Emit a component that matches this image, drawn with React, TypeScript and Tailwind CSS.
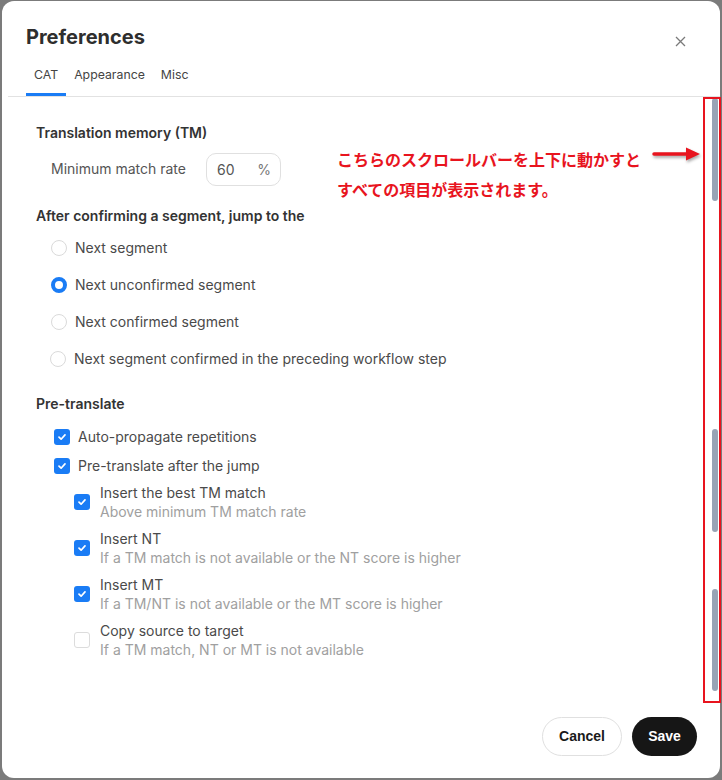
import React from "react";

const font = { fontFamily: "Inter, 'Noto Sans', 'Noto Sans CJK JP', sans-serif" };

function Radio({ checked }: { checked?: boolean }) {
  return checked ? (
    <span className="box-border inline-block h-4 w-4 shrink-0 rounded-full border-[4px] border-[#1a7cf5] bg-white" />
  ) : (
    <span className="box-border inline-block h-4 w-4 shrink-0 rounded-full border-[1.5px] border-[#dadada] bg-white" />
  );
}

function Check({ checked }: { checked?: boolean }) {
  return checked ? (
    <span className="flex h-4 w-4 shrink-0 items-center justify-center rounded-[3px] bg-[#1a7cf5]">
      <svg width="10" height="10" viewBox="0 0 10 10" fill="none">
        <path d="M2 5.2L4.1 7.2L8 2.9" stroke="white" strokeWidth="1.7" strokeLinecap="round" strokeLinejoin="round" />
      </svg>
    </span>
  ) : (
    <span className="box-border h-4 w-4 shrink-0 rounded-[3px] border-[1.5px] border-[#dcdcdc] bg-white" />
  );
}

function RadioRow({ label, checked, shift }: { label: string; checked?: boolean; shift?: boolean }) {
  return (
    <div className={`flex h-[37px] items-center gap-2 ${shift ? "pl-[14px]" : "pl-[15px]"}`}>
      <Radio checked={checked} />
      <span className="text-[14px] text-[#4a4a4a]">{label}</span>
    </div>
  );
}

function SubCheck({ title, sub, checked }: { title: string; sub: string; checked?: boolean }) {
  return (
    <div className="flex items-center gap-[10px] pl-[38px]">
      <Check checked={checked} />
      <div className="flex flex-col">
        <span className="text-[14px] leading-[19px] text-[#4a4a4a]">{title}</span>
        <span className="text-[14px] leading-[19px] text-[#a0a0a0]">{sub}</span>
      </div>
    </div>
  );
}

export default function App() {
  return (
    <div className="h-[780px] w-[722px] overflow-hidden bg-[#7b7b7b] pl-[2px] pt-[1px]" style={font}>
      <div className="relative flex h-[777px] w-[718px] flex-col rounded-[12px] bg-white">
        {/* header */}
        <div className="flex items-start justify-between pl-[24px] pr-[34px] pt-[22px]">
          <h1 className="text-[20px] font-bold leading-[28px] text-[#2e2e2e]">Preferences</h1>
          <svg className="mt-[13px]" width="11" height="11" viewBox="0 0 11 11">
            <path d="M1 1L10 10M10 1L1 10" stroke="#7a7a7a" strokeWidth="1.3" />
          </svg>
        </div>
        {/* tabs */}
        <div className="ml-[6px] mt-[15px] flex border-b border-[#e2e2e2] pl-[18px]">
          <div className="border-b-[3px] border-[#1a7cf5] px-2 pb-[9px] text-[12.3px] leading-[18px] text-[#444]">CAT</div>
          <div className="px-2 pb-[9px] text-[12.3px] leading-[18px] text-[#444]">Appearance</div>
          <div className="px-2 pb-[9px] text-[12.3px] leading-[18px] text-[#444]">Misc</div>
        </div>

        {/* content */}
        <div className="relative flex-1 pl-[34px] pt-[26px]">
          <div className="text-[14px] font-semibold leading-[20px] text-[#333]">Translation memory (TM)</div>
          <div className="mt-[10px] flex items-center pl-[15px]">
            <span className="w-[155px] pb-[3px] text-[14px] text-[#555]">Minimum match rate</span>
            <div className="flex h-[33px] w-[75px] items-center justify-between rounded-[10px] border border-[#e0e0e0] pl-[10px] pr-[9px] text-[14px] text-[#555]">
              <span>60</span>
              <span className="text-[#777]">%</span>
            </div>
          </div>

          <div className="mt-[20px] text-[14px] font-semibold leading-[20px] text-[#333]">After confirming a segment, jump to the</div>
          <div className="mt-[3px] flex flex-col">
            <RadioRow label="Next segment" />
            <RadioRow label="Next unconfirmed segment" checked />
            <RadioRow label="Next confirmed segment" />
            <RadioRow label="Next segment confirmed in the preceding workflow step" shift />
          </div>

          <div className="mt-[17px] text-[14px] font-semibold leading-[20px] text-[#333]">Pre-translate</div>
          <div className="mt-[8px] flex flex-col">
            <div className="flex h-[29px] items-center gap-2 pl-[18px]">
              <Check checked />
              <span className="text-[14px] text-[#4a4a4a]">Auto-propagate repetitions</span>
            </div>
            <div className="flex h-[29px] items-center gap-2 pl-[18px]">
              <Check checked />
              <span className="text-[14px] text-[#4a4a4a]">Pre-translate after the jump</span>
            </div>
            <div className="mt-[3px] flex flex-col gap-[8px]">
              <SubCheck title="Insert the best TM match" sub="Above minimum TM match rate" checked />
              <SubCheck title="Insert NT" sub="If a TM match is not available or the NT score is higher" checked />
              <SubCheck title="Insert MT" sub="If a TM/NT is not available or the MT score is higher" checked />
              <SubCheck title="Copy source to target" sub="If a TM match, NT or MT is not available" />
            </div>
          </div>

          {/* scrollbar thumbs */}
          <div className="absolute right-[2px] top-[1px] h-[103px] w-[6px] rounded-full bg-[#98a3b5]" />
          <div className="absolute right-[2px] top-[332px] h-[103px] w-[6px] rounded-full bg-[#98a3b5]" />
          <div className="absolute right-[2px] top-[492px] h-[102px] w-[6px] rounded-full bg-[#98a3b5]" />

          {/* red annotation */}
          <div className="absolute left-[335px] top-[47px] text-[16px] font-bold leading-[30px] text-[#e8141e]" style={{ fontFamily: "'Noto Sans CJK JP', sans-serif" }}>
            <div>こちらのスクロールバーを上下に動かすと</div>
            <div>すべての項目が表示されます。</div>
          </div>
          <svg className="absolute left-[650px] top-[49px]" width="50" height="16" viewBox="0 0 50 16" style={{ filter: "drop-shadow(1px 2px 1.5px rgba(0,0,0,0.35))" }}>
            <path d="M2 8H36" stroke="#e8141e" strokeWidth="3.5" strokeLinecap="round" />
            <path d="M34 1.5L48 8L34 14.5Z" fill="#e8141e" />
          </svg>
          <div className="absolute right-[-1px] top-0 h-[606px] w-[18px] border-2 border-[#e8141e]" />
        </div>

        {/* footer */}
        <div className="flex justify-end gap-[10px] pb-[22px] pr-[23px]">
          <button className="h-[39px] w-[80px] rounded-full border border-[#e0e0e0] bg-white text-[14px] font-bold text-[#1a1a1a]" style={{ fontFamily: "'Liberation Sans', Arial, sans-serif" }}>
            Cancel
          </button>
          <button className="h-[39px] w-[65px] rounded-full bg-[#161616] text-[14px] font-bold text-white" style={{ fontFamily: "'Liberation Sans', Arial, sans-serif" }}>
            Save
          </button>
        </div>
      </div>
    </div>
  );
}
